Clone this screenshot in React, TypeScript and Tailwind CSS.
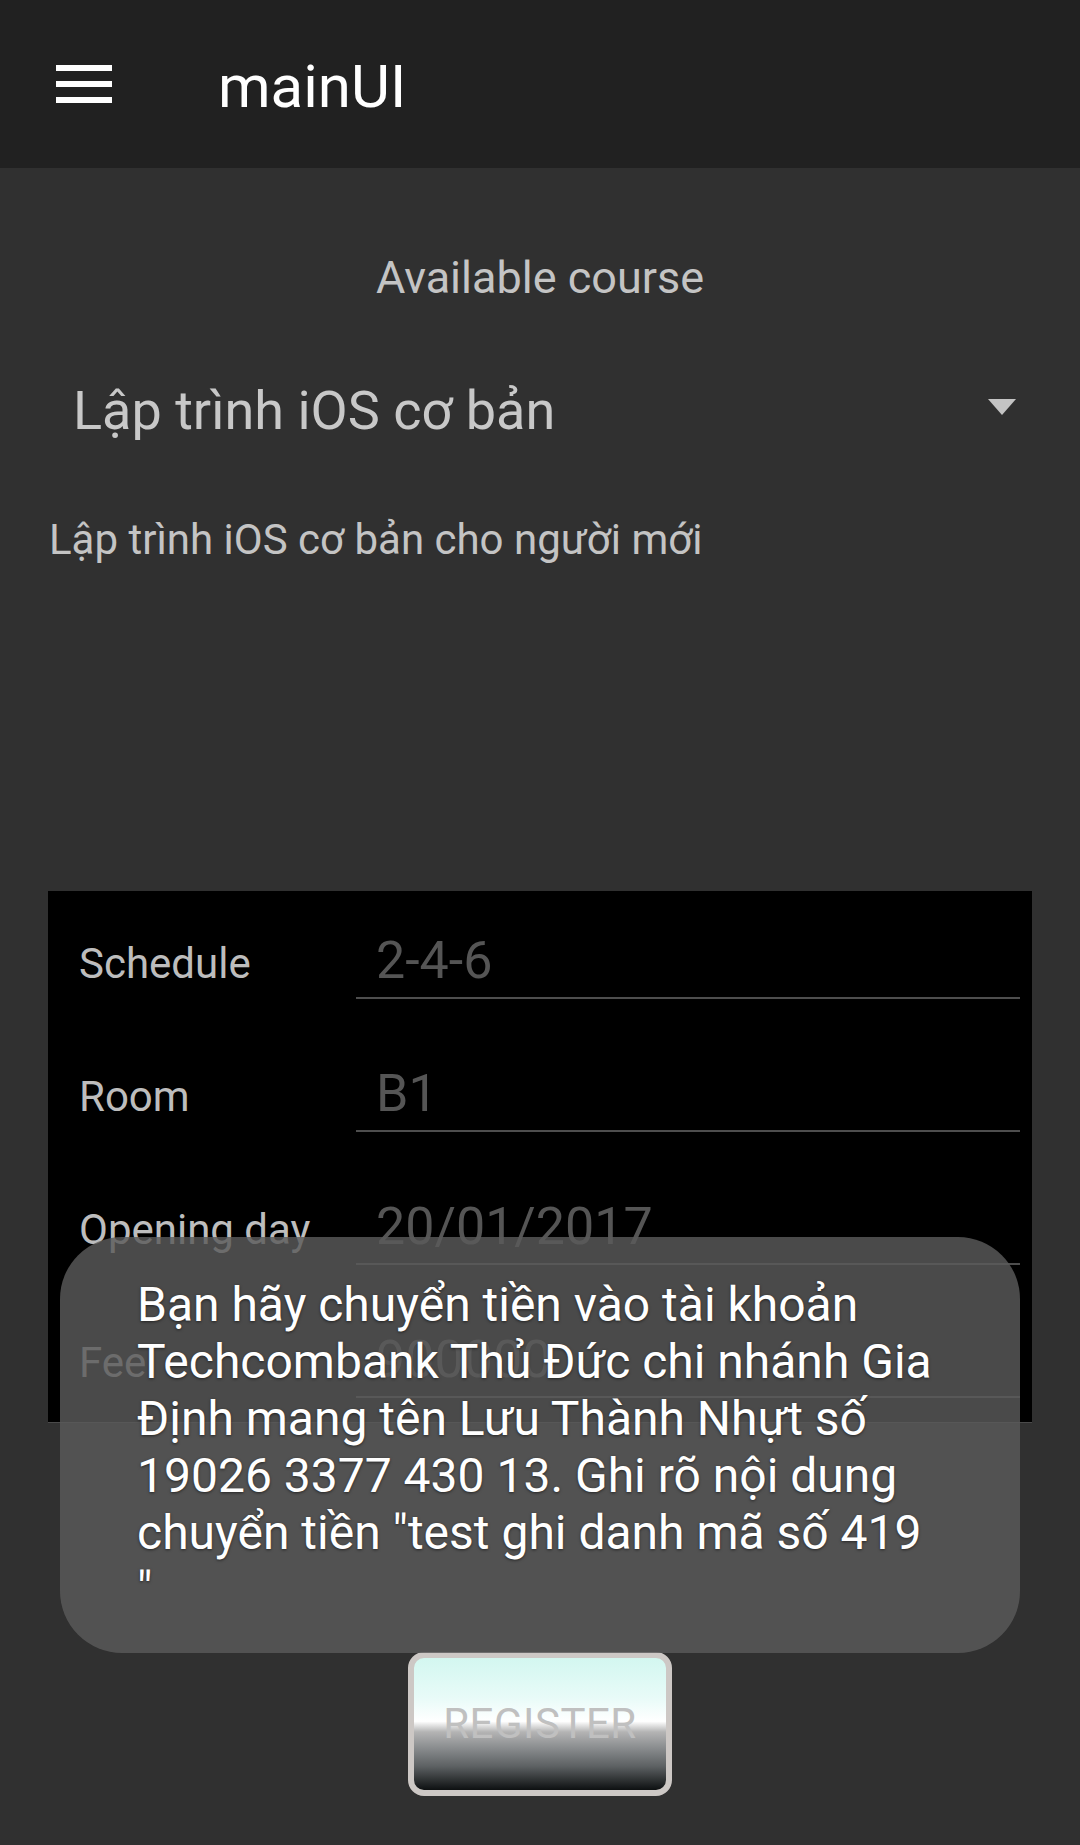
import React from "react";

const ROWS = [
  { label: "Schedule", value: "2-4-6" },
  { label: "Room", value: "B1" },
  { label: "Opening day", value: "20/01/2017" },
  { label: "Fee", value: "900000" },
];

const TOAST_LINES = [
  "Bạn hãy chuyển tiền vào tài khoản",
  "Techcombank Thủ Đức chi nhánh Gia",
  "Định mang tên Lưu Thành Nhựt số",
  "19026 3377 430 13. Ghi rõ nội dung",
  "chuyển tiền \"test ghi danh mã số 419",
  "\"",
];

export default function App() {
  return (
    <div className="relative flex min-h-[1845px] w-[1080px] flex-col bg-[#303030] font-['Roboto','Noto_Sans',sans-serif]">
      {/* Toolbar */}
      <header className="flex h-[168px] shrink-0 items-center bg-[#212121]">
        <div className="ml-[56px] flex w-[56px] flex-col gap-[10px]">
          <span className="h-[6px] w-full bg-white" />
          <span className="h-[6px] w-full bg-white" />
          <span className="h-[6px] w-full bg-white" />
        </div>
        <h1 className="ml-[106px] pt-[5px] text-[60px] leading-none text-white">mainUI</h1>
      </header>

      <p className="mt-[87px] text-center text-[45px] leading-none text-[#c4c4c4]">Available course</p>

      {/* Spinner */}
      <div className="mx-[48px] mt-[84px] flex items-center justify-between pl-[25px] pr-[16px]">
        <span className="text-[54px] leading-none text-[#c8c8c8]">Lập trình iOS cơ bản</span>
        <svg width="28" height="16" viewBox="0 0 28 16" className="-mt-[8px]">
          <polygon points="0,0 28,0 14,16" fill="#c4c4c4" />
        </svg>
      </div>

      <p className="ml-[49px] mt-[81px] text-[42px] leading-none text-[#c4c4c4]">
        Lập trình iOS cơ bản cho người mới
      </p>

      {/* Detail panel */}
      <div className="mx-[48px] mt-[330px] flex flex-col gap-[25px] border-b border-[#4a4a4a] bg-black pb-[24px]">
        {ROWS.map((r) => (
          <div key={r.label} className="flex h-[108px] items-end pl-[31px] pr-[12px]">
            <div className="flex w-full items-baseline">
              <span className="w-[277px] shrink-0 text-[42px] leading-none text-[#bdbdbd]">{r.label}</span>
              <span className="flex-1 border-b-[2.5px] border-[#4e4e4e] pb-[10px] pl-[20px] text-[52px] leading-none text-[#555555]">
                {r.value}
              </span>
            </div>
          </div>
        ))}
      </div>

      {/* Register */}
      <button className="mx-auto mt-[229px] flex h-[144px] w-[264px] items-center justify-center rounded-[16px] border-[6px] border-[#cdc8c5] bg-[linear-gradient(to_bottom,#d3f7f0_0%,#e8fbf8_30%,#ffffff_48%,#b4b4b4_56%,#8a8d8f_68%,#5d6163_82%,#0d1011_100%)]">
        <span className="text-[42px] leading-none tracking-[0.5px] text-[#c0c0c0]">REGISTER</span>
      </button>

      {/* Toast */}
      <div className="absolute left-[60px] top-[1237px] h-[416px] w-[960px] rounded-[62px] bg-[rgba(90,90,90,0.82)] pl-[77px] pt-[39px]">
        {TOAST_LINES.map((l, i) => (
          <div
            key={i}
            className="whitespace-nowrap text-[48px] leading-[57px] text-white [text-shadow:0_1px_3px_rgba(0,0,0,0.55)]"
          >
            {l}
          </div>
        ))}
      </div>
    </div>
  );
}
